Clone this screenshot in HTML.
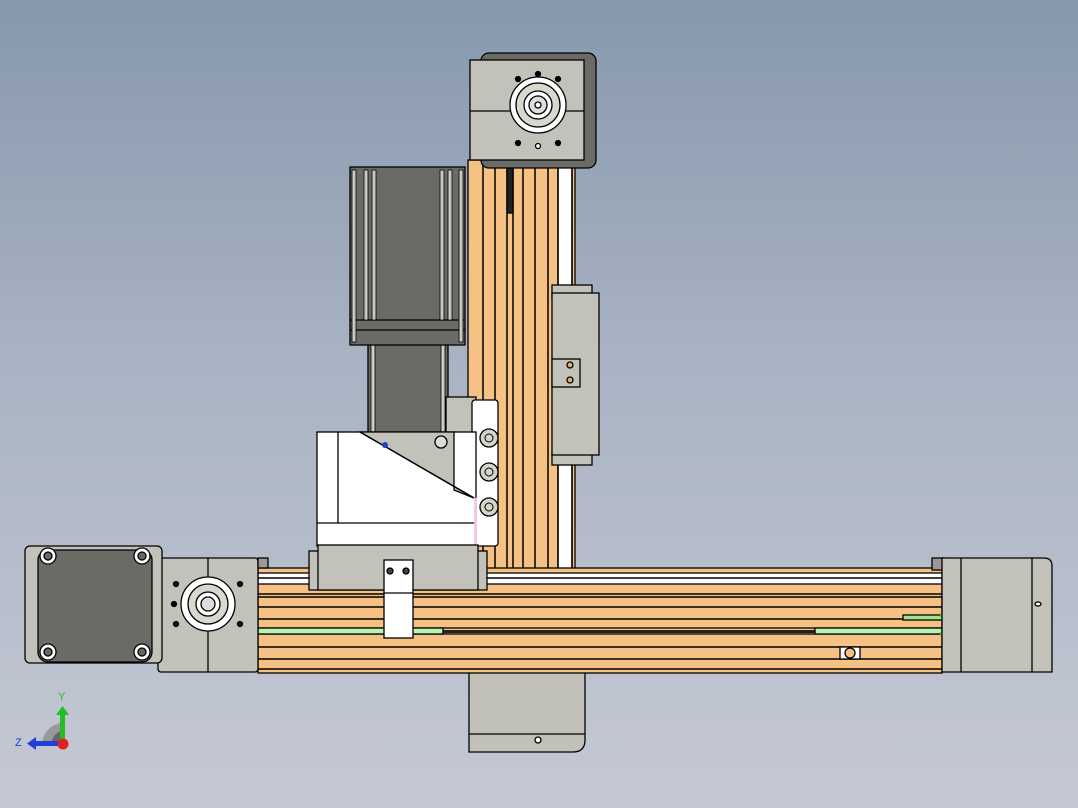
<!DOCTYPE html>
<html><head><meta charset="utf-8"><style>
html,body{margin:0;padding:0;width:1078px;height:808px;overflow:hidden}
body{background:linear-gradient(#8798ad,#a9b3c3 45%,#c5c9d4)}
svg{position:absolute;left:0;top:0}
text{font-family:"Liberation Sans",sans-serif}
</style></head><body>
<svg width="1078" height="808" viewBox="0 0 1078 808" stroke="#000" stroke-width="1.3">
<!-- bottom block -->
<path d="M469 672H585V740Q585 752 573 752H469Z" fill="#c1c1b9"/>
<line x1="469" y1="734" x2="585" y2="734"/>
<circle cx="538" cy="740" r="3" fill="#fff"/>

<!-- vertical rail -->
<rect x="468" y="160" width="107" height="410" fill="#f5c185"/>
<rect x="558" y="160" width="14" height="410" fill="#fff"/>
<g stroke-width="1.5">
<line x1="483" y1="160" x2="483" y2="570"/><line x1="495" y1="160" x2="495" y2="570"/>
<line x1="507" y1="160" x2="507" y2="570"/><line x1="513" y1="160" x2="513" y2="570"/>
<line x1="523" y1="160" x2="523" y2="570"/><line x1="535" y1="160" x2="535" y2="570"/>
<line x1="548" y1="160" x2="548" y2="570"/><line x1="558" y1="160" x2="558" y2="570"/>
<line x1="572" y1="160" x2="572" y2="570"/>
</g>
<rect x="507" y="165" width="6" height="48" fill="#222"/>

<!-- top cap -->
<rect x="481" y="53" width="115" height="115" rx="8" fill="#6a6a66"/>
<rect x="470" y="60" width="114" height="100" fill="#c2c2ba"/>
<line x1="470" y1="111" x2="584" y2="111"/>
<circle cx="538" cy="105" r="28" fill="#fff"/>
<circle cx="538" cy="105" r="22" fill="#d8d8d0"/>
<circle cx="538" cy="105" r="14" fill="#fff"/>
<circle cx="538" cy="105" r="9" fill="#ddd"/>
<circle cx="538" cy="105" r="3" fill="#fff"/>
<g fill="#000"><circle cx="518" cy="79" r="2.5"/><circle cx="538" cy="74" r="2.5"/><circle cx="558" cy="79" r="2.5"/><circle cx="518" cy="143" r="2.5"/><circle cx="558" cy="143" r="2.5"/></g>
<circle cx="538" cy="146" r="2.5" fill="#fff"/>

<!-- vertical carriage -->
<rect x="552" y="285" width="40" height="13" fill="#c2c2ba"/>
<rect x="552" y="453" width="40" height="12" fill="#c2c2ba"/>
<rect x="552" y="293" width="47" height="162" fill="#c2c2ba"/>
<rect x="552" y="359" width="28" height="28" fill="#c2c2ba"/>
<circle cx="570" cy="365" r="3" fill="#e8b070"/><circle cx="570" cy="380" r="3" fill="#e8b070"/>

<!-- vertical motor -->
<rect x="368" y="340" width="80" height="95" fill="#6b6b66"/>
<rect x="371" y="340" width="4" height="95" fill="#ccc" stroke-width="0.8"/>
<rect x="441" y="340" width="4" height="95" fill="#ccc" stroke-width="0.8"/>
<rect x="350" y="167" width="115" height="178" fill="#6b6b66"/>
<line x1="350" y1="330" x2="465" y2="330"/><line x1="350" y1="320" x2="465" y2="320"/>
<g fill="#c8c8c0" stroke-width="0.8">
<rect x="352" y="170" width="4" height="172"/><rect x="364" y="170" width="4" height="150"/><rect x="372" y="170" width="4" height="150"/>
<rect x="440" y="170" width="4" height="150"/><rect x="448" y="170" width="4" height="150"/><rect x="459" y="170" width="4" height="172"/>
</g>

<!-- mount behind -->
<rect x="446" y="397" width="30" height="100" fill="#c2c2ba"/>
<rect x="452" y="440" width="20" height="55" fill="#aaa"/>
<circle cx="462" cy="452" r="5" fill="#ddd"/><circle cx="462" cy="466" r="5" fill="#ddd"/><circle cx="462" cy="480" r="5" fill="#ddd"/>

<!-- screw plate -->
<rect x="472" y="400" width="26" height="146" rx="3" fill="#fff"/>
<g fill="#d4d4c8"><circle cx="489" cy="438" r="9"/><circle cx="489" cy="472" r="9"/><circle cx="489" cy="507" r="9"/></g>
<g fill="none" stroke-width="1"><circle cx="489" cy="438" r="4"/><circle cx="489" cy="472" r="4"/><circle cx="489" cy="507" r="4"/></g>

<!-- white block -->
<rect x="317" y="432" width="159" height="114" fill="#fff"/>
<polygon points="360,432 454,432 454,490 474,498" fill="#c2c2ba"/>
<line x1="360" y1="432" x2="474" y2="498"/>
<line x1="338" y1="432" x2="338" y2="523"/>
<line x1="317" y1="523" x2="476" y2="523"/>
<rect x="474" y="498" width="3" height="48" fill="#f2c6f2" stroke="none"/>
<circle cx="441" cy="442" r="6" fill="#ddd"/>
<circle cx="385" cy="445" r="3" fill="#2040d0" stroke="none"/>

<!-- horizontal rail -->
<rect x="258" y="568" width="684" height="105" fill="#f5c185"/>
<rect x="258" y="573" width="684" height="11" fill="#fff"/>
<g stroke-width="1.5">
<line x1="258" y1="578" x2="942" y2="578"/><line x1="258" y1="594" x2="942" y2="594"/>
<line x1="258" y1="597" x2="942" y2="597"/><line x1="258" y1="607" x2="942" y2="607"/>
<line x1="258" y1="619" x2="942" y2="619"/><line x1="258" y1="647" x2="942" y2="647"/>
<line x1="258" y1="659" x2="942" y2="659"/><line x1="258" y1="669" x2="942" y2="669"/>
</g>
<rect x="258" y="628" width="684" height="6" fill="#f5c185"/>
<rect x="440" y="630" width="380" height="3" fill="#222" stroke="none"/>
<rect x="258" y="628" width="185" height="6" fill="#b8f4b0"/>
<rect x="815" y="628" width="127" height="6" fill="#b8f4b0"/>
<rect x="903" y="615" width="40" height="5" fill="#9ee890"/>
<path d="M940 615Q952 617 952 624Q952 633 940 634" fill="none" stroke="#5cc850" stroke-width="4"/>
<rect x="840" y="647" width="20" height="12" fill="#fff"/>
<circle cx="850" cy="653" r="5" fill="#f5c185"/>

<!-- slider base -->
<rect x="309" y="551" width="178" height="39" fill="#c2c2ba"/>
<rect x="318" y="545" width="160" height="45" fill="#c2c2ba"/>
<!-- bracket -->
<rect x="384" y="560" width="29" height="78" fill="#fff"/>
<line x1="384" y1="593" x2="413" y2="593"/>
<circle cx="390" cy="571" r="3" fill="#444"/><circle cx="406" cy="571" r="3" fill="#444"/>

<!-- left cap -->
<rect x="158" y="558" width="100" height="114" rx="3" fill="#c2c2ba"/>
<line x1="208" y1="558" x2="208" y2="672"/>
<circle cx="208" cy="604" r="27" fill="#fff"/>
<circle cx="208" cy="604" r="20" fill="#d8d8d0"/>
<circle cx="208" cy="604" r="12" fill="#fff"/>
<circle cx="208" cy="604" r="7" fill="#ddd"/>
<g fill="#000"><circle cx="176" cy="584" r="2.5"/><circle cx="174" cy="604" r="2.5"/><circle cx="176" cy="624" r="2.5"/><circle cx="240" cy="584" r="2.5"/><circle cx="240" cy="624" r="2.5"/></g>
<rect x="258" y="558" width="10" height="10" fill="#999"/>

<!-- left motor -->
<rect x="25" y="546" width="137" height="117" rx="5" fill="#c2c2ba"/>
<rect x="38" y="550" width="114" height="112" rx="10" fill="#6b6b66"/>
<g fill="#fff"><circle cx="48" cy="556" r="8"/><circle cx="142" cy="556" r="8"/><circle cx="48" cy="652" r="8"/><circle cx="142" cy="652" r="8"/></g>
<g fill="#666"><circle cx="48" cy="556" r="4"/><circle cx="142" cy="556" r="4"/><circle cx="48" cy="652" r="4"/><circle cx="142" cy="652" r="4"/></g>

<!-- right cap -->
<rect x="932" y="558" width="12" height="12" fill="#999"/>
<path d="M942 558H1044Q1052 558 1052 566V672H942Z" fill="#c2c2ba"/>
<line x1="961" y1="558" x2="961" y2="672"/><line x1="1032" y1="558" x2="1032" y2="672"/>
<ellipse cx="1038" cy="604" rx="3" ry="2" fill="#fff"/>

<!-- axis triad -->
<path d="M42 743A22 22 0 0 1 62 723V743Z" fill="#999" stroke="none"/>
<path d="M52 743A12 12 0 0 1 62 731V743Z" fill="#666" stroke="none"/>
<rect x="60" y="713" width="5" height="30" fill="#20c020" stroke="none"/>
<polygon points="56,715 62.5,706 69,715" fill="#20c020" stroke="none"/>
<rect x="35" y="741" width="28" height="5" fill="#1f3fd8" stroke="none"/>
<polygon points="36,737 27,743.5 36,750" fill="#1f3fd8" stroke="none"/>
<circle cx="63" cy="744" r="5.5" fill="#e02020" stroke="none"/>
<text x="58" y="700" font-size="11" fill="#20c020" stroke="none">Y</text>
<text x="15" y="746" font-size="11" fill="#1f3fd8" stroke="none">Z</text>
</svg>
</body></html>
